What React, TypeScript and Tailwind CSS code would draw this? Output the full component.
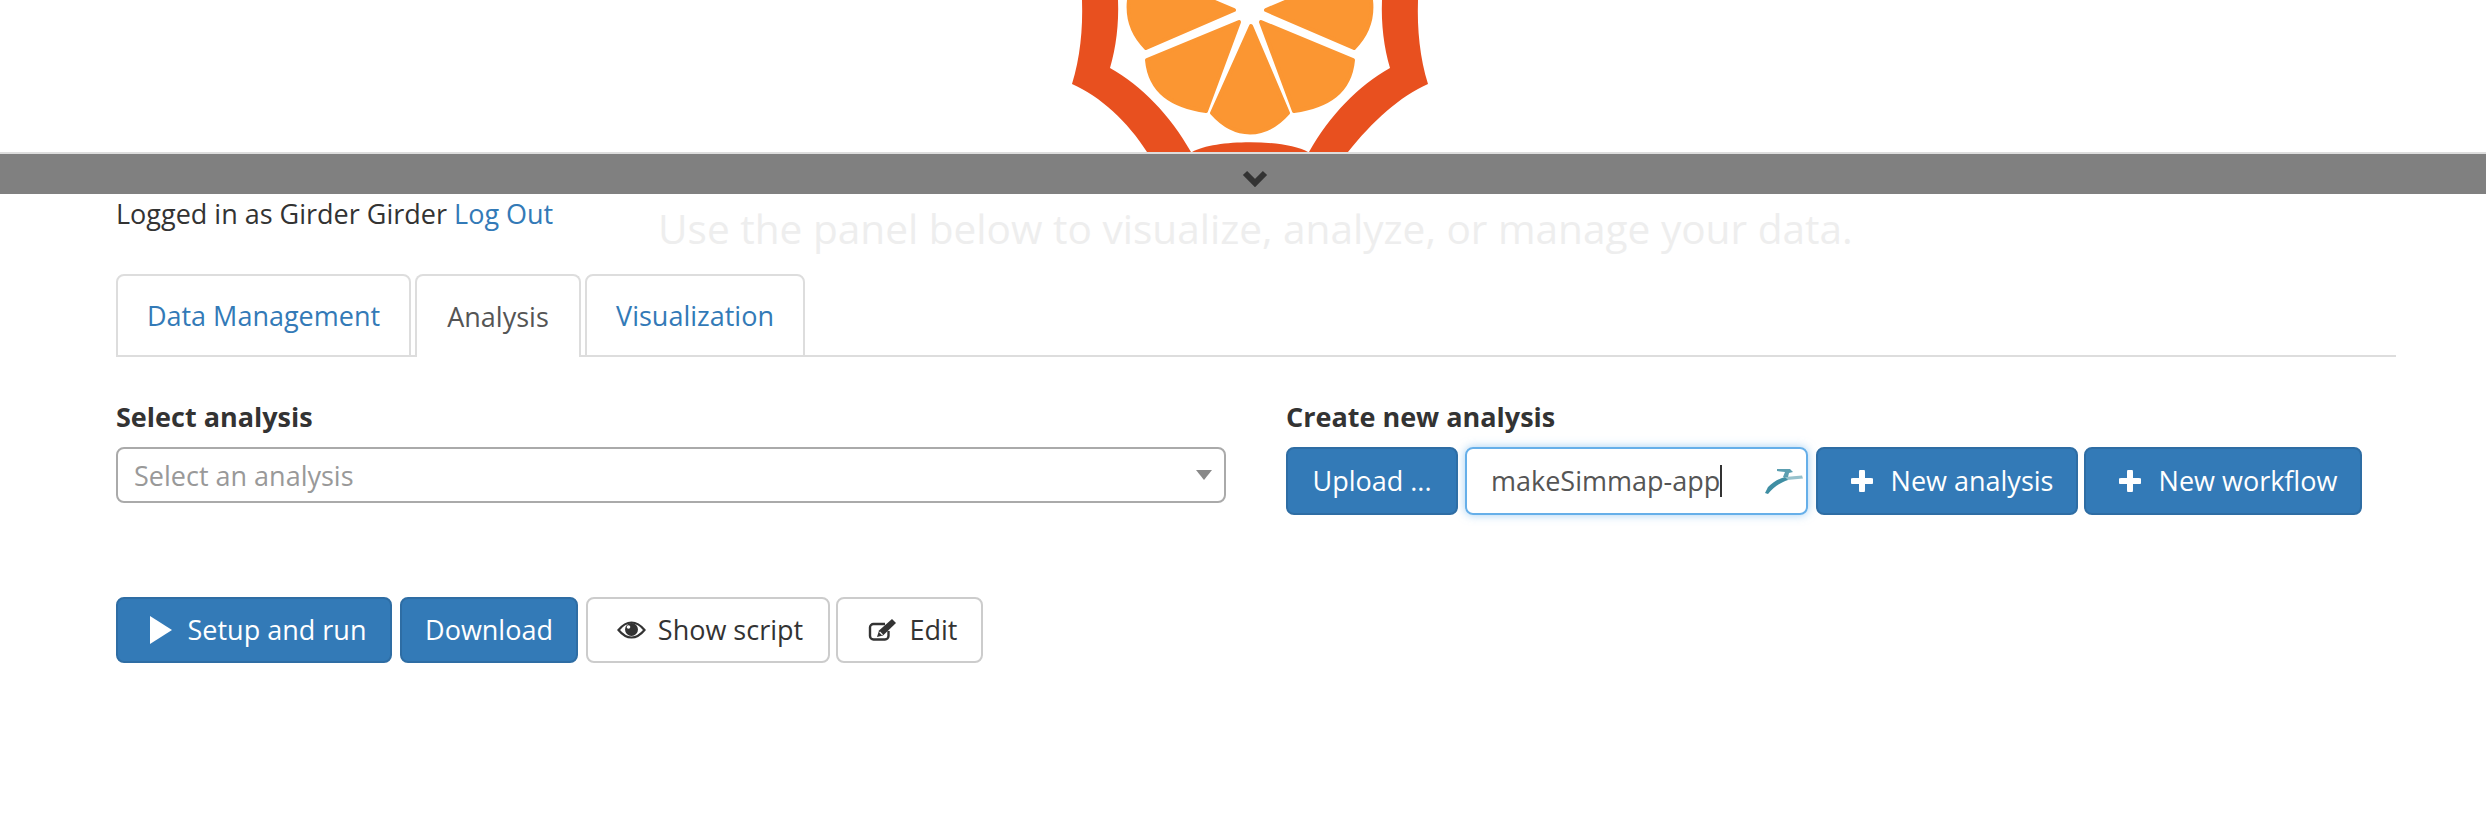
const font = "font-['Open_Sans','Noto_Sans',sans-serif]";
const btnBlue = "h-[66px] flex items-center justify-center rounded-lg border-2 border-[#2e6da4] bg-[#337ab7] text-white shrink-0";
const btnWhite = "h-[66px] flex items-center justify-center rounded-lg border-2 border-[#ccc] bg-white text-[#333] shrink-0";

function Logo() {
  return (
    <svg width="370" height="152" viewBox="1065 0 370 152">
      {/* rind */}
      <path
        fill="#e8501f"
        d="M1082 0 C1083 30 1080 58 1072 84 C1100 96 1128 122 1147 152 L1191 152 C1170 115 1142 86 1110 68 C1116 48 1119 24 1118 0 Z"
      />
      <path
        fill="#e8501f"
        d="M1418 0 C1417 30 1420 58 1428 84 C1400 96 1372 122 1348 152 L1309 152 C1330 115 1358 86 1390 68 C1384 48 1381 24 1382 0 Z"
      />
      <path fill="#e8501f" d="M1192 152 C1215 139 1285 139 1308 152 Z" />
      {/* segments */}
      <g fill="#fb9632" stroke="#fb9632" strokeWidth="4" strokeLinejoin="round">
        <path d="M1251 26 L1288 113 C1265 139 1235 139 1212 113 Z" />
        <path d="M1239 22 L1206 111 C1172 106 1150 92 1147 60 Z" />
        <path d="M1261 22 L1294 111 C1328 106 1350 92 1353 60 Z" />
        <path d="M1234 10 L1210 0 L1129 0 C1127 18 1132 34 1146 48 Z" />
        <path d="M1266 10 L1290 0 L1371 0 C1373 18 1368 34 1354 48 Z" />
      </g>
    </svg>
  );
}

function PlusIcon() {
  return (
    <svg width="22" height="22" viewBox="0 0 22 22" className="shrink-0">
      <path d="M11 2v18M2 11h18" stroke="#fff" strokeWidth="6" strokeLinecap="round" />
    </svg>
  );
}

function EyeIcon() {
  return (
    <svg width="29" height="18" viewBox="0 0 29 18" className="shrink-0">
      <path
        d="M1.500 9C6 3.500 10 1.500 14.500 1.500S23 3.500 27.500 9C23 14.500 19 16.500 14.500 16.500S6 14.500 1.500 9Z"
        fill="none"
        stroke="#333"
        strokeWidth="2.200"
      />
      <circle cx="14.500" cy="8.500" r="6.500" fill="#333" />
      <circle cx="11.500" cy="6" r="1.800" fill="#fff" />
    </svg>
  );
}

function EditIcon() {
  return (
    <svg width="28" height="22" viewBox="0 0 28 22" className="shrink-0">
      <path
        d="M17 5H5.500a3.500 3.500 0 0 0-3.500 3.500V17a3.500 3.500 0 0 0 3.500 3.500H17a3.500 3.500 0 0 0 3.500-3.500v-5"
        fill="none"
        stroke="#333"
        strokeWidth="2.400"
      />
      <path fill="#333" d="M24 0l4 4-13 12.500-6 1.500 2-6.500z" />
      <path fill="#fff" d="M12 12.500l3 3-1 .8-2.800-2.800z" />
    </svg>
  );
}

function RunnerIcon() {
  return (
    <svg width="38" height="26" viewBox="0 0 38 26" fill="#3f8ea3">
      <path d="M0 25L3 19C8 14 13 11 20 9L23 12C14 15 8 20 3 26Z" />
      <path d="M20 9L37 7.500 38 10.500 22 12Z" opacity="0.55" />
      <path d="M12 1L25 1 28 4 24 5 23 9 18 9 20 4 12 3Z" opacity="0.85" />
    </svg>
  );
}

export default function App() {
  return (
    <div className={`${font} relative h-[814px] bg-white text-[27px] leading-[38px] text-[#333] overflow-hidden`}>
      <div className="flex justify-center pl-[14px] h-[152px] overflow-hidden">
        <Logo />
      </div>
      <div className="h-[2px] bg-[#ddd]" />
      <div className="h-[40px] bg-[#808080] flex items-center justify-center pl-[24px] pt-[7px]">
        <svg width="26" height="18" viewBox="0 0 26 18">
          <path d="M3 4l10 10L23 4" fill="none" stroke="#333" strokeWidth="6" />
        </svg>
      </div>

      <div className="pl-[116px] pr-[90px]">
        <div className="relative h-[80px] pt-[1px]">
          Logged in as Girder Girder <span className="text-[#337ab7]">Log Out</span>
          <div className="absolute left-[542px] top-[7px] text-[40.6px] leading-[56px] text-[#eeeeee] whitespace-nowrap">
            Use the panel below to visualize, analyze, or manage your data.
          </div>
        </div>

        <div className="flex gap-[4px] border-b-2 border-[#ddd] h-[83px]">
          <div className="w-[295px] h-[83px] flex items-center justify-center rounded-t-lg border-2 border-[#ddd] text-[#337ab7]">
            Data Management
          </div>
          <div className="w-[166px] h-[83px] flex items-center justify-center rounded-t-lg border-2 border-b-0 border-[#ddd] bg-white text-[#555]">
            Analysis
          </div>
          <div className="w-[220px] h-[83px] flex items-center justify-center rounded-t-lg border-2 border-[#ddd] text-[#337ab7]">
            Visualization
          </div>
        </div>

        <div className="flex gap-[60px] mt-[41px]">
          <div className="w-[1110px]">
            <div className="font-bold">Select analysis</div>
            <div className="mt-[11px] h-[56px] rounded-lg border-2 border-[#aaa] flex items-center justify-between pl-[16px] pr-[12px] text-[#999]">
              <span className="pt-[2px]">Select an analysis</span>
              <div className="w-0 h-0 border-x-[8px] border-x-transparent border-t-[10px] border-t-[#888]" />
            </div>
          </div>
          <div>
            <div className="font-bold">Create new analysis</div>
            <div className="mt-[11px] flex">
              <div className={`${btnBlue} w-[172px] h-[68px]`}>Upload ...</div>
              <div className="relative ml-[7px] w-[343px] h-[68px] rounded-lg border-2 border-[#66afe9] shadow-[0_0_10px_rgba(102,175,233,0.6)] flex items-center pl-[24px] text-[#555]">
                <span>makeSimmap-app</span>
                <span className="w-[2px] h-[32px] bg-[#333]" />
                <div className="absolute right-[3px] top-[19px] flex">
                  <RunnerIcon />
                </div>
              </div>
              <div className={`${btnBlue} ml-[8px] w-[262px] h-[68px] gap-[18px] pl-[10px]`}>
                <PlusIcon />
                New analysis
              </div>
              <div className={`${btnBlue} ml-[6px] w-[278px] h-[68px] gap-[18px] pl-[10px]`}>
                <PlusIcon />
                New workflow
              </div>
            </div>
          </div>
        </div>

        <div className="flex mt-[82px]">
          <div className={`${btnBlue} w-[276px] gap-[16px] pl-[8px]`}>
            <div className="w-0 h-0 border-y-[14px] border-y-transparent border-l-[22px] border-l-white" />
            Setup and run
          </div>
          <div className={`${btnBlue} ml-[8px] w-[178px]`}>Download</div>
          <div className={`${btnWhite} ml-[8px] w-[244px] gap-[12px] pl-[4px]`}>
            <EyeIcon />
            Show script
          </div>
          <div className={`${btnWhite} ml-[6px] w-[147px] gap-[14px] pl-[6px]`}>
            <EditIcon />
            Edit
          </div>
        </div>
      </div>
    </div>
  );
}
